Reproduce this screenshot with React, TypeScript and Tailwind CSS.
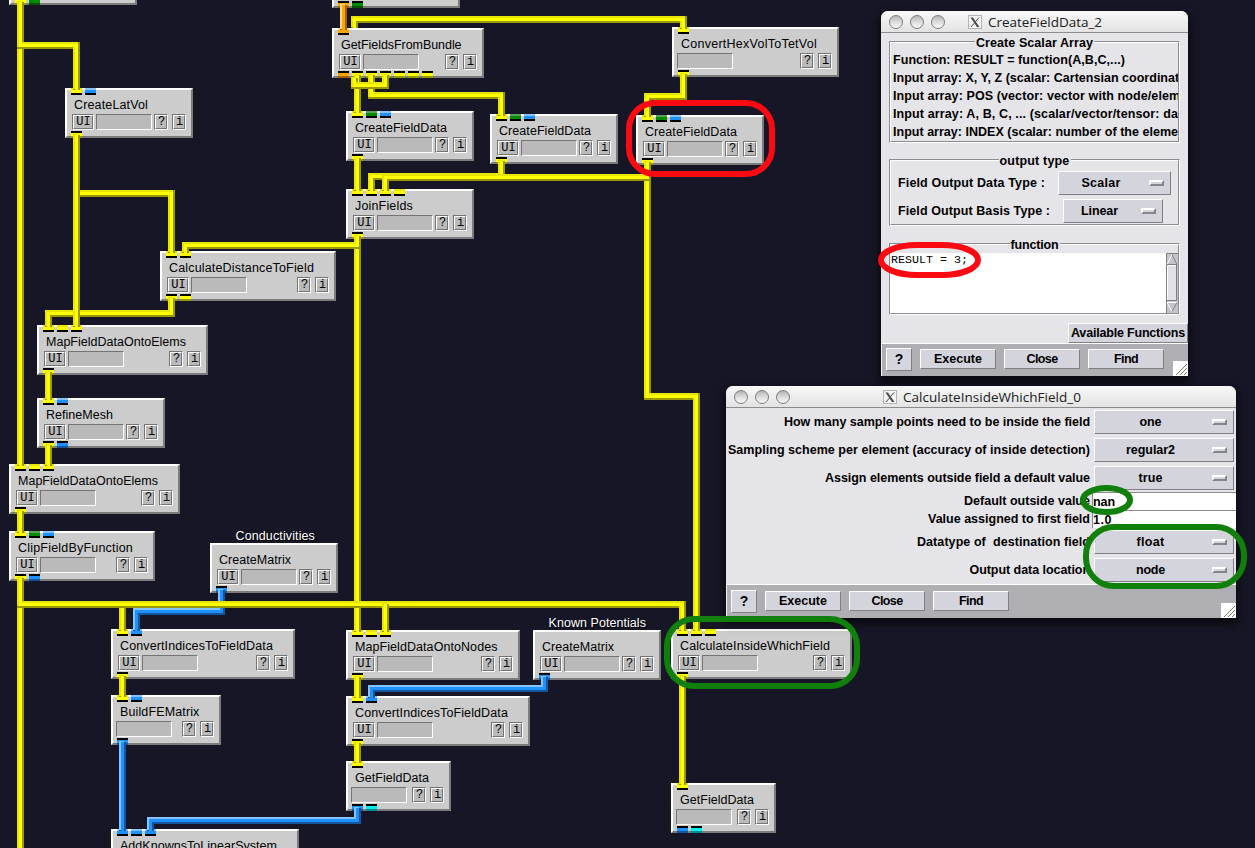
import { useLayoutEffect, useRef, type ReactNode } from "react";

type Hue = "y" | "b" | "g" | "o" | "c";

const HUES: Record<Hue, { base: string; light: string; dark: string }> = {
  y: { base: "#ffff00", light: "#e6e600", dark: "#999900" },
  b: { base: "#1e90ff", light: "#84c5ff", dark: "#14569b" },
  g: { base: "#008b00", light: "#56a156", dark: "#005300" },
  o: { base: "#ffa500", light: "#ffd98a", dark: "#a35f00" },
  c: { base: "#00eeee", light: "#80f6f6", dark: "#008f8f" },
};

/** Text whose letter spacing is adjusted so that it spans exactly `w` pixels. */
function Fit({ w, children, className = "" }: { w: number; children: string; className?: string }) {
  const ref = useRef<HTMLSpanElement>(null);
  useLayoutEffect(() => {
    const el = ref.current;
    if (!el) return;
    el.style.letterSpacing = "0px";
    const natural = el.getBoundingClientRect().width;
    el.style.letterSpacing = `${(w - natural) / children.length}px`;
  }, [w, children]);
  return (
    <span ref={ref} className={`inline-block whitespace-pre ${className}`}>
      {children}
    </span>
  );
}

type ModuleProps = {
  x: number;
  y: number;
  w: number;
  title?: string;
  tw?: number;
  noUi?: boolean;
  top?: string;
  bottom?: string;
};

const MODULES: ModuleProps[] = [
  { x: 9, y: -45, w: 128, bottom: "yg" },
  { x: 332, y: -42, w: 128, bottom: "og" },
  { x: 332, y: 28, w: 152, title: "GetFieldsFromBundle", tw: 120.5, top: "o", bottom: "oyyyyyy" },
  { x: 672, y: 27, w: 167, title: "ConvertHexVolToTetVol", tw: 136, noUi: true, top: "y", bottom: "y" },
  { x: 65, y: 88, w: 128, title: "CreateLatVol", tw: 74, top: "yb", bottom: "y" },
  { x: 346, y: 111, w: 128, title: "CreateFieldData", tw: 92, top: "ygb", bottom: "y" },
  { x: 490, y: 114, w: 128, title: "CreateFieldData", tw: 92, top: "ygb", bottom: "y" },
  { x: 636, y: 115, w: 128, title: "CreateFieldData", tw: 92, top: "ygb", bottom: "y" },
  { x: 346, y: 189, w: 128, title: "JoinFields", tw: 58, top: "yyyy", bottom: "y" },
  { x: 160, y: 251, w: 176, title: "CalculateDistanceToField", tw: 145, top: "yy", bottom: "yy" },
  { x: 37, y: 325, w: 171, title: "MapFieldDataOntoElems", tw: 140, top: "yyy", bottom: "y" },
  { x: 37, y: 398, w: 128, title: "RefineMesh", tw: 67, top: "yb", bottom: "yb" },
  { x: 9, y: 464, w: 171, title: "MapFieldDataOntoElems", tw: 140, top: "yyy", bottom: "y" },
  { x: 9, y: 531, w: 146, title: "ClipFieldByFunction", tw: 115, top: "ygb", bottom: "yb" },
  { x: 210, y: 543, w: 128, title: "CreateMatrix", tw: 72, bottom: "b" },
  { x: 111, y: 629, w: 184, title: "ConvertIndicesToFieldData", tw: 153, top: "yb", bottom: "y" },
  { x: 111, y: 695, w: 110, title: "BuildFEMatrix", tw: 79.5, noUi: true, top: "yb", bottom: "b" },
  { x: 111, y: 829, w: 188, title: "AddKnownsToLinearSystem", tw: 157, top: "bbb" },
  { x: 346, y: 630, w: 174, title: "MapFieldDataOntoNodes", tw: 142.5, top: "yyy", bottom: "y" },
  { x: 533, y: 630, w: 128, title: "CreateMatrix", tw: 72, bottom: "b" },
  { x: 346, y: 696, w: 184, title: "ConvertIndicesToFieldData", tw: 153, top: "yb", bottom: "y" },
  { x: 346, y: 761, w: 105, title: "GetFieldData", tw: 74, noUi: true, top: "y", bottom: "bc" },
  { x: 671, y: 629, w: 181, title: "CalculateInsideWhichField", tw: 150, top: "yyy", bottom: "y" },
  { x: 671, y: 783, w: 105, title: "GetFieldData", tw: 74, noUi: true, top: "y", bottom: "bc" },
];

const WIRES: [Hue, string][] = [
  ["o", "343.5,5 343.5,30"],
  ["y", "20.5,2 20.5,466"],
  ["y", "20.5,2 20.5,45.5 76.5,45.5 76.5,90"],
  ["y", "76.5,135 76.5,193.5 171.5,193.5 171.5,253"],
  ["y", "171.5,298 171.5,313.5 48.5,313.5 48.5,327"],
  ["y", "76.5,135 76.5,327"],
  ["y", "357.5,75 357.5,113"],
  ["y", "371.5,75 371.5,95.5 501.5,95.5 501.5,116"],
  ["y", "385.5,75 385.5,85.5 354.5,85.5 354.5,78"],
  ["y", "354.5,28 354.5,19.5 683.5,19.5 683.5,29"],
  ["y", "683.5,74 683.5,96.5 647.5,96.5 647.5,117"],
  ["y", "357.5,158 357.5,191"],
  ["y", "501.5,161 501.5,176.5 371.5,176.5 371.5,191"],
  ["y", "647.5,162 647.5,396.5 696.5,396.5 696.5,631"],
  ["y", "647.5,162 647.5,177.5 385.5,177.5 385.5,191"],
  ["y", "357.5,236 357.5,632"],
  ["y", "357.5,236 357.5,245.5 185.5,245.5 185.5,253"],
  ["y", "48.5,372 48.5,400"],
  ["y", "48.5,445 48.5,466"],
  ["y", "20.5,511 20.5,533"],
  ["y", "20.5,578 20.5,850"],
  ["b", "221.5,590 221.5,611.5 136.5,611.5 136.5,631"],
  ["y", "122.5,604 122.5,631"],
  ["y", "20.5,578 20.5,604.5 682.5,604.5 682.5,631"],
  ["y", "385.5,604 385.5,632"],
  ["y", "122.5,676 122.5,697"],
  ["b", "122.5,742 122.5,831"],
  ["b", "357.5,808 357.5,820.5 150.5,820.5 150.5,831"],
  ["y", "357.5,677 357.5,698"],
  ["y", "357.5,743 357.5,763"],
  ["b", "544.5,677 544.5,688.5 371.5,688.5 371.5,698"],
  ["y", "682.5,676 682.5,785"],
];

function Port({ hue, index, side }: { hue: Hue; index: number; side: "top" | "bottom" }) {
  const c = HUES[hue];
  const left = 4 + index * 14;
  return side === "top" ? (
    <div className="absolute -top-[2px] flex h-[7px] w-[11px] flex-col" style={{ left }}>
      <div className="h-[2px]" style={{ background: c.light }} />
      <div className="h-[3px]" style={{ background: c.base }} />
      <div className="h-[2px] bg-black" />
    </div>
  ) : (
    <div className="absolute -bottom-[2px] flex h-[7px] w-[11px] flex-col" style={{ left }}>
      <div className="h-[2px] bg-black" />
      <div className="h-[3px]" style={{ background: c.base }} />
      <div className="h-[2px]" style={{ background: c.dark }} />
    </div>
  );
}

const SUNKEN = "border border-t-[#747474] border-l-[#747474] border-r-white border-b-white";
const RAISED = "border border-t-white border-l-white border-r-[#747474] border-b-[#747474]";

function KeyButton({ children, wide }: { children: string; wide?: boolean }) {
  return (
    <div className={`h-4 ${wide ? "w-[22px]" : "w-[14px]"} ${SUNKEN}`}>
      <div
        className={`flex h-full items-center justify-center bg-[#bababa] pl-px font-['Liberation_Mono',monospace] text-[12px] leading-none text-black ${RAISED}`}
      >
        {children}
      </div>
    </div>
  );
}

function Module({ x, y, w, title, tw = 0, noUi, top = "", bottom = "" }: ModuleProps) {
  return (
    <div
      className="absolute h-[50px] border-2 border-t-white border-r-[#7b7b7b] border-b-[#7b7b7b] border-l-white bg-[#cccccc]"
      style={{ left: x, top: y, width: w }}
    >
      {[...top].map((h, i) => (
        <Port key={`t${i}`} hue={h as Hue} index={i} side="top" />
      ))}
      {[...bottom].map((h, i) => (
        <Port key={`b${i}`} hue={h as Hue} index={i} side="bottom" />
      ))}
      <div className="h-[24px] pt-[8px] pl-[7px] text-[12.5px] leading-[14px] text-black">
        {title && <Fit w={tw}>{title}</Fit>}
      </div>
      {title && (
        <div className={`flex pr-[5px] ${noUi ? "pl-[3px]" : "pl-[5px]"}`}>
          {!noUi && (
            <div className="mr-[2px]">
              <KeyButton wide>UI</KeyButton>
            </div>
          )}
          <div className={`h-4 w-[56px] bg-[#bababa] ${SUNKEN}`} />
          <div className="ml-auto flex gap-1">
            <KeyButton>?</KeyButton>
            <KeyButton>i</KeyButton>
          </div>
        </div>
      )}
    </div>
  );
}

function Wires() {
  return (
    <svg className="absolute inset-0" width="1255" height="848" fill="none" shapeRendering="crispEdges">
      {WIRES.map(([hue, pts], i) => (
        <g key={i}>
          <polyline points={pts} stroke={HUES[hue].dark} strokeWidth="7" />
          <polyline points={pts} stroke={HUES[hue].light} strokeWidth="5" transform="translate(-1 -1)" />
          <polyline points={pts} stroke={HUES[hue].base} strokeWidth="3" />
        </g>
      ))}
    </svg>
  );
}

function Note({ x, y, w, children }: { x: number; y: number; w: number; children: string }) {
  return (
    <div
      className="absolute text-[12.5px] leading-[14px] text-white [text-shadow:1px_1px_0_#000]"
      style={{ left: x, top: y }}
    >
      <Fit w={w}>{children}</Fit>
    </div>
  );
}

function TitleBar({ title, tw, indent }: { title: string; tw: number; indent: string }) {
  return (
    <div className="flex h-[22px] items-center rounded-t-[7px] border-b border-[#8c8c8c] bg-linear-to-b from-[#f8f8f8] to-[#e3e3e3] pl-[8px]">
      <div className="flex gap-[7px]">
        {[0, 1, 2].map((i) => (
          <div
            key={i}
            className="h-[14px] w-[14px] rounded-full border border-[#7d7d7d] bg-linear-to-b from-[#b4b4b4] via-[#dcdcdc] to-[#fafafa]"
          />
        ))}
      </div>
      <div className={`flex items-center ${indent}`}>
        <svg width="14" height="14" viewBox="0 0 14 14">
          <rect x=".5" y=".5" width="13" height="13" fill="#f4f4f4" stroke="#b5b5b5" />
          <path d="M2.5 2.5H5L11.5 12H9Z" fill="#4a4a4a" />
          <path d="M11 2.5 7.6 6.5M6.2 8.2 3 12" stroke="#4a4a4a" strokeWidth="1" />
        </svg>
        <Fit w={tw} className="ml-[6px] font-['Open_Sans','Noto_Sans',sans-serif] text-[13.5px] leading-[20px] text-[#202020]">
          {title}
        </Fit>
      </div>
    </div>
  );
}

function Frame({ legend, lw, className, children }: { legend: string; lw: number; className: string; children: ReactNode }) {
  return (
    <div className={`relative mx-[8px] border border-t-[#8c8c90] border-r-white border-b-white border-l-[#8c8c90] ${className}`}>
      <div className="h-full overflow-hidden border border-t-white border-r-[#8c8c90] border-b-[#8c8c90] border-l-white">
        {children}
      </div>
      <div className="absolute -top-[6px] left-0 flex w-full justify-center leading-[14px]">
        <Fit w={lw} className="bg-[#e5e4e9] px-px">
          {legend}
        </Fit>
      </div>
    </div>
  );
}

const BEVEL = "border border-t-white border-l-white border-r-[#808084] border-b-[#808084] bg-[#d4d4dd]";

function Menu({ label, lw, className }: { label: string; lw: number; className: string }) {
  return (
    <div className={`flex h-[24px] shrink-0 items-center ${BEVEL} ${className}`}>
      <div className="flex flex-1 justify-center">
        <Fit w={lw}>{label}</Fit>
      </div>
      <div className="mr-[6px] ml-[6px] h-[6px] w-[15px] border-2 border-t-white border-r-[#85858a] border-b-[#85858a] border-l-white bg-[#d4d4dd]" />
    </div>
  );
}

function Action({ label, lw }: { label: string; lw: number }) {
  return (
    <div className={`flex h-[20px] w-[76px] items-center justify-center ${BEVEL}`}>
      <Fit w={lw}>{label}</Fit>
    </div>
  );
}

function Footer({ className }: { className: string }) {
  return (
    <div className={`relative flex items-center gap-[8px] border-t border-l border-t-white border-l-[#f0f0f2] bg-[#afaeb3] pl-[4px] ${className}`}>
      <div className={`flex h-[23px] w-[26px] items-center justify-center text-[14px] ${BEVEL}`}>?</div>
      <Action label="Execute" lw={48} />
      <Action label="Close" lw={31} />
      <Action label="Find" lw={24} />
      <svg className="absolute right-0 bottom-0" width="15" height="15">
        <rect width="15" height="15" fill="#fff" />
        <path d="M3 14 14 3M7 14 14 7M11 14 14 11" stroke="#808080" />
      </svg>
    </div>
  );
}

function Line({ w, children, tail = "" }: { w: number; children: string; tail?: string }) {
  return (
    <div className="h-[18px] pl-[2px] leading-[18px] whitespace-pre">
      <Fit w={w}>{children}</Fit>
      {tail}
    </div>
  );
}

const WINDOW =
  "absolute flex flex-col rounded-t-[7px] bg-[#e5e4e9] text-[12.5px] font-bold leading-[14px] text-black shadow-[0_4px_9px_2px_rgba(0,0,0,0.6)]";

function CreateFieldDataWindow() {
  return (
    <div className={`${WINDOW} top-[11px] left-[881px] w-[307px]`}>
      <div className="font-normal">
        <TitleBar title="CreateFieldData_2" tw={114} indent="ml-[23px]" />
      </div>
      <Frame legend="Create Scalar Array" lw={119} className="mt-[8px] h-[102px]">
        <div className="pt-[8px]">
          <Line w={232}>Function: RESULT = function(A,B,C,...)</Line>
          <Line w={282} tail="tes)">Input array: X, Y, Z (scalar: Cartensian coordina</Line>
          <Line w={276} tail="ment">Input array: POS (vector: vector with node/ele</Line>
          <Line w={285} tail="ta">Input array: A, B, C, ... (scalar/vector/tensor: da</Line>
          <Line w={285} tail="nt)">Input array: INDEX (scalar: number of the eleme</Line>
        </div>
      </Frame>
      <Frame legend="output type" lw={72} className="mt-[16px] h-[67px]">
        <div className="flex flex-col gap-[4px] pt-[10px] pl-[6px]">
          <div className="flex items-center">
            <div className="w-[161px] pl-px">
              <Fit w={147}>Field Output Data Type :</Fit>
            </div>
            <Menu label="Scalar" lw={39} className="w-[113px]" />
          </div>
          <div className="flex items-center">
            <div className="w-[166px] pl-px">
              <Fit w={152}>Field Output Basis Type :</Fit>
            </div>
            <Menu label="Linear" lw={37} className="w-[100px]" />
          </div>
        </div>
      </Frame>
      <Frame legend="function" lw={50} className="mt-[17px] h-[72px]">
        <div className="flex h-full pt-[8px]">
          <div className="flex-1 bg-white font-['Liberation_Mono',monospace] text-[11.67px] font-normal">
            <Fit w={77}>RESULT = 3;</Fit>
          </div>
          <svg width="12" height="60">
            <rect width="12" height="60" fill="#c4c4ca" />
            <path d="M.5 60V.5H12" stroke="#808084" fill="none" />
            <path d="M1 11.5 6 1.5" stroke="#fff" fill="none" />
            <path d="M6 1.5 11 11.5H1" stroke="#808084" fill="none" />
            <rect x="1.5" y="12.5" width="9" height="35" fill="#e0e0e6" stroke="#808084" />
            <path d="M1.5 47V12.5H10" stroke="#fff" fill="none" />
            <path d="M11 49.5H1L6 58.5" stroke="#fff" fill="none" />
            <path d="M11 49.5 6 58.5" stroke="#808084" fill="none" />
          </svg>
        </div>
      </Frame>
      <div className={`mt-[8px] ml-auto flex h-[20px] w-[120px] items-center justify-center ${BEVEL}`}>
        <Fit w={114}>Available Functions</Fit>
      </div>
      <Footer className="h-[33px] pb-[2px]" />
    </div>
  );
}

function Row({ label, lw, value, vw }: { label: string; lw: number; value: string; vw: number }) {
  return (
    <div className="flex h-[28px] items-center">
      <div className="mr-[4px] flex w-[364px] justify-end">
        <Fit w={lw}>{label}</Fit>
      </div>
      <Menu label={value} lw={vw} className="w-[140px]" />
    </div>
  );
}

function Entry({ label, lw, value, vw }: { label: string; lw: number; value: string; vw: number }) {
  return (
    <div className="flex h-[18px] items-center">
      <div className="mr-[2px] flex w-[364px] justify-end">
        <Fit w={lw}>{label}</Fit>
      </div>
      <div className="flex h-full flex-1 items-center border-t border-l border-[#8c8c90] bg-white">
        <Fit w={vw}>{value}</Fit>
      </div>
    </div>
  );
}

function InsideWhichFieldWindow() {
  return (
    <div className={`${WINDOW} top-[386px] left-[726px] w-[510px]`}>
      <div className="font-normal">
        <TitleBar title="CalculateInsideWhichField_0" tw={178} indent="ml-[93px]" />
      </div>
      <Row label="How many sample points need to be inside the field" lw={306} value="one" vw={22} />
      <Row label="Sampling scheme per element (accuracy of inside detection)" lw={362} value="regular2" vw={49} />
      <Row label="Assign elements outside field a default value" lw={265} value="true" vw={24} />
      <Entry label="Default outside value" lw={126} value="nan" vw={22} />
      <Entry label="Value assigned to first field" lw={162} value="1.0" vw={19} />
      <Row label="Datatype of  destination field" lw={173} value="float" vw={28} />
      <Row label="Output data location" lw={120.5} value="node" vw={29} />
      <Footer className="h-[34px] pb-px" />
    </div>
  );
}

function Annotations() {
  return (
    <svg className="pointer-events-none absolute inset-0" width="1255" height="848" fill="none" strokeWidth="6">
      <g stroke="#fb0a12">
        <rect x="629" y="103" width="143" height="71" rx="26" />
        <rect x="881" y="245" width="97" height="30" rx="36" ry="15" />
      </g>
      <g stroke="#10800a">
        <ellipse cx="1106.5" cy="500" rx="23.5" ry="12" />
        <rect x="1086" y="527" width="158" height="59" rx="28" />
        <rect x="667" y="619" width="190" height="67" rx="27" />
      </g>
    </svg>
  );
}

export default function App() {
  return (
    <div className="relative h-[848px] w-[1255px] overflow-hidden bg-[#171626] font-['Liberation_Sans',Arial,sans-serif]">
      {MODULES.map((m, i) => (
        <Module key={i} {...m} />
      ))}
      <Wires />
      <Note x={235.5} y={529} w={79.5}>Conductivities</Note>
      <Note x={548.5} y={616} w={97.5}>Known Potentials</Note>
      <CreateFieldDataWindow />
      <InsideWhichFieldWindow />
      <Annotations />
    </div>
  );
}
